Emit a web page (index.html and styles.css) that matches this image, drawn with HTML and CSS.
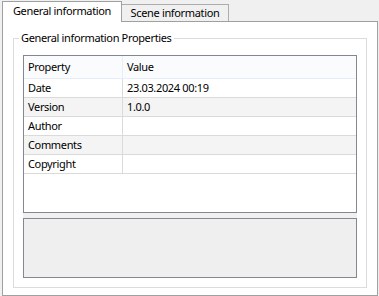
FILE: index.html
```html
<!DOCTYPE html>
<html>
<head>
<meta charset="utf-8">
<link rel="stylesheet" href="styles.css">
</head>
<body>
<div class="tabs">
  <div class="tab active">General information</div>
  <div class="tab">Scene information</div>
</div>
<div class="page">
  <fieldset class="group">
    <legend class="group-title">General information Properties</legend>
    <div class="grid">
      <div class="row head">
        <div class="cell name">Property</div>
        <div class="cell value">Value</div>
      </div>
      <div class="row">
        <div class="cell name">Date</div>
        <div class="cell value">23.03.2024 00:19</div>
      </div>
      <div class="row alt">
        <div class="cell name">Version</div>
        <div class="cell value">1.0.0</div>
      </div>
      <div class="row">
        <div class="cell name">Author</div>
        <div class="cell value"></div>
      </div>
      <div class="row alt">
        <div class="cell name">Comments</div>
        <div class="cell value"></div>
      </div>
      <div class="row">
        <div class="cell name">Copyright</div>
        <div class="cell value"></div>
      </div>
    </div>
    <div class="splitter"></div>
    <div class="desc"></div>
  </fieldset>
</div>
</body>
</html>
```

FILE: styles.css
```css
html, body {
  margin: 0;
  padding: 0;
}
body {
  background: #f0f0f0;
  font-family: "Noto Sans", "DejaVu Sans", sans-serif;
  font-size: 11px;
  letter-spacing: -0.35px;
  color: #000;
  width: 379px;
  height: 296px;
  overflow: hidden;
}
.tabs {
  display: flex;
  align-items: flex-end;
  height: 21px;
  padding-left: 2px;
}
.tab {
  box-sizing: border-box;
  height: 17px;
  width: 108px;
  margin-left: -1px;
  border: 1px solid #acacac;
  border-bottom: none;
  background: #f0f0f0;
  display: flex;
  align-items: center;
  justify-content: center;
  line-height: 1;
  padding-bottom: 1px;
}
.tab.active {
  position: relative;
  z-index: 1;
  margin-left: 0;
  width: 120px;
  height: 21px;
  margin-bottom: -1px;
  background: #fff;
  border-color: #a0a0a0;
  padding-bottom: 4px;
}
.page {
  box-sizing: border-box;
  margin-left: 2px;
  width: 376px;
  height: 275px;
  border: 1px solid #a0a0a0;
  background: #fff;
  padding: 9px 0 0 10px;
}
.group {
  box-sizing: border-box;
  margin: 0;
  width: 354px;
  height: 257px;
  border: 1px solid #dcdcdc;
  padding: 10px 9px 9px 9px;
  min-width: 0;
}
.group-title {
  padding: 0 2px;
  margin-left: -4px;
  line-height: 14px;
}
.grid {
  box-sizing: border-box;
  height: 158px;
  border: 1px solid #828790;
  background: #fff;
}
.row {
  display: flex;
  height: 19px;
  box-sizing: border-box;
  border-bottom: 1px solid #dadada;
}
.row.alt {
  background: #f4f4f4;
}
.row.head {
  height: 23px;
  background: #fafbfd;
  border-bottom: 1px solid #e6eef9;
}
.cell {
  box-sizing: border-box;
  display: flex;
  align-items: center;
  padding-left: 4px;
  padding-bottom: 1px;
  white-space: nowrap;
}
.cell.name {
  width: 99px;
  border-right: 1px solid #dadada;
}
.row.head .cell.name {
  border-right-color: #e6eef9;
}
.cell.value {
  flex: 1;
}
.splitter {
  height: 5px;
  background: #f0f0f0;
}
.desc {
  box-sizing: border-box;
  height: 60px;
  border: 1px solid #828790;
  background: #efefef;
}
```
